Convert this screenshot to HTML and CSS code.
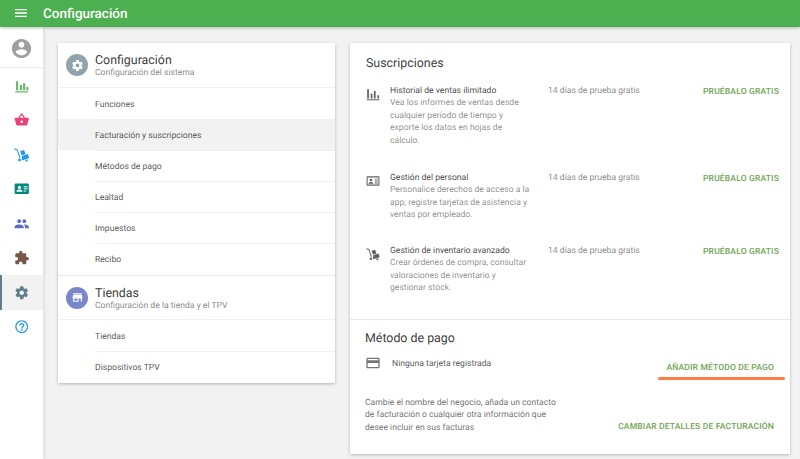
FILE: index.html
```html
<!DOCTYPE html>
<html lang="es">
<head>
<meta charset="utf-8">
<title>Configuración</title>
<link rel="stylesheet" href="styles.css">
</head>
<body>
<header class="topbar">
  <svg class="menu-icon" viewBox="0 0 24 24"><path d="M3 18h18v-2H3v2zm0-5h18v-2H3v2zm0-7v2h18V6H3z"/></svg>
  <span class="topbar-title">Configuración</span>
</header>
<div class="shell">
  <nav class="sidebar">
    <div class="nav-item nav-user"><svg viewBox="0 0 24 24" class="ic-user"><path d="M12 2C6.48 2 2 6.48 2 12s4.48 10 10 10 10-4.48 10-10S17.52 2 12 2zm0 3c1.66 0 3 1.34 3 3s-1.34 3-3 3-3-1.34-3-3 1.34-3 3-3zm0 14.2c-2.5 0-4.71-1.28-6-3.22.03-1.99 4-3.08 6-3.08s5.97 1.09 6 3.08c-1.29 1.94-3.5 3.22-6 3.22z"/></svg></div>
    <div class="nav-item"><svg viewBox="0 0 24 24" class="ic-green"><path d="M2 20.500h20v1.800H2zM3 5h3.400v14H3zM9 11h3.400v8H9zM14 8h3.400v11H14zM19 14h3.200v5H19z"/></svg></div>
    <div class="nav-item"><svg viewBox="0 0 24 24" class="ic-pink"><path d="M17.2 9l-4.4-6.5c-.2-.3-.5-.4-.8-.4s-.6.1-.8.4L6.800 9H2c-.6 0-1 .4-1 1l.04.3 2.540 9.270c.23.840 1 1.460 1.920 1.460h13c.92 0 1.690-.620 1.930-1.460l2.540-9.270L23 10c0-.6-.4-1-1-1h-4.800zM9 9l3-4.400L15 9H9zm3 8c-1.100 0-2-.9-2-2s.9-2 2-2 2 .9 2 2-.9 2-2 2z"/></svg></div>
    <div class="nav-item"><svg viewBox="0 0 24 24" class="ic-blue"><path d="M1 2l4.300 1.500 4.800 12.800-1.800.700L4.400 5 .5 4zM9.500 6.500l6-2 2.500 6.500-6 2.200zM12.500 14l9-3 2 6.500-11.500 3.500z"/><circle cx="8.500" cy="20" r="2.200"/><circle cx="19.500" cy="21" r="1.800"/></svg></div>
    <div class="nav-item"><svg viewBox="0 0 24 24" class="ic-teal"><path fill-rule="evenodd" d="M1 5.500A1.500 1.500 0 0 1 2.500 4h19A1.500 1.500 0 0 1 23 5.500v13a1.500 1.500 0 0 1-1.500 1.500h-19A1.500 1.500 0 0 1 1 18.500zM8.500 7.500a2.500 2.500 0 1 0 0 5 2.500 2.500 0 0 0 0-5zM4 16.500h9v-1c0-1.500-3-2.300-4.500-2.300S4 14 4 15.500zM15 8v1.500h6V8zM15 11.300v1.500h6v-1.500zM15 14.600v1.500h4v-1.500z"/></svg></div>
    <div class="nav-item"><svg viewBox="0 0 24 24" class="ic-indigo"><path d="M16 11c1.660 0 2.990-1.340 2.990-3S17.660 5 16 5c-1.660 0-3 1.340-3 3s1.340 3 3 3zm-8 0c1.660 0 2.990-1.340 2.990-3S9.660 5 8 5C6.340 5 5 6.340 5 8s1.340 3 3 3zm0 2c-2.330 0-7 1.170-7 3.500V19h14v-2.500c0-2.330-4.670-3.500-7-3.500zm8 0c-.29 0-.62.020-.97.050 1.160.840 1.970 1.970 1.970 3.450V19h6v-2.500c0-2.330-4.670-3.500-7-3.500z"/></svg></div>
    <div class="nav-item"><svg viewBox="0 0 24 24" class="ic-brown"><path d="M20.500 11H19V7c0-1.100-.9-2-2-2h-4V3.500C13 2.120 11.880 1 10.500 1S8 2.120 8 3.500V5H4c-1.100 0-1.990.9-1.990 2v3.800H3.500c1.490 0 2.700 1.210 2.700 2.700s-1.210 2.700-2.700 2.700H2V20c0 1.100.9 2 2 2h3.800v-1.500c0-1.490 1.210-2.700 2.700-2.700 1.490 0 2.700 1.210 2.700 2.700V22H17c1.100 0 2-.9 2-2v-4h1.500c1.380 0 2.500-1.120 2.500-2.500S21.880 11 20.500 11z"/></svg></div>
    <div class="nav-item nav-active"><svg viewBox="0 0 24 24" class="ic-slate"><path d="M19.430 12.980c.04-.32.070-.64.070-.98s-.03-.66-.07-.98l2.110-1.650c.19-.15.240-.42.120-.64l-2-3.460c-.12-.22-.39-.3-.61-.22l-2.490 1c-.52-.4-1.080-.73-1.690-.98l-.38-2.650C14.460 2.180 14.250 2 14 2h-4c-.25 0-.46.180-.49.420l-.38 2.650c-.61.250-1.170.590-1.690.98l-2.490-1c-.23-.09-.49 0-.61.220l-2 3.460c-.13.220-.07.490.12.640l2.110 1.650c-.04.320-.07.650-.07.980s.03.660.07.980l-2.110 1.650c-.19.150-.24.420-.12.640l2 3.460c.12.220.39.300.61.220l2.490-1c.52.400 1.080.730 1.690.980l.38 2.650c.03.240.24.420.49.420h4c.25 0 .46-.18.49-.42l.38-2.650c.61-.25 1.170-.59 1.690-.98l2.490 1c.23.090.49 0 .61-.22l2-3.460c.12-.22.070-.49-.12-.64l-2.110-1.650zM12 15.500c-1.930 0-3.500-1.570-3.500-3.500s1.570-3.500 3.500-3.500 3.500 1.570 3.500 3.500-1.570 3.500-3.500 3.500z"/></svg></div>
    <div class="nav-item"><svg viewBox="0 0 24 24" class="ic-help"><path d="M11 18h2v-2h-2v2zm1-16C6.480 2 2 6.480 2 12s4.480 10 10 10 10-4.480 10-10S17.520 2 12 2zm0 18c-4.410 0-8-3.590-8-8s3.590-8 8-8 8 3.590 8 8-3.590 8-8 8zm0-14c-2.210 0-4 1.790-4 4h2c0-1.100.9-2 2-2s2 .9 2 2c0 2-3 1.750-3 5h2c0-2.250 3-2.500 3-5 0-2.210-1.790-4-4-4z"/></svg></div>
  </nav>
  <main class="content">
    <section class="card settings-card">
      <div class="sec-head">
        <span class="sec-badge badge-slate"><svg viewBox="0 0 24 24"><path d="M19.430 12.980c.04-.32.070-.64.070-.98s-.03-.66-.07-.98l2.110-1.650c.19-.15.240-.42.120-.64l-2-3.460c-.12-.22-.39-.3-.61-.22l-2.490 1c-.52-.4-1.080-.73-1.690-.98l-.38-2.650C14.460 2.180 14.250 2 14 2h-4c-.25 0-.46.180-.49.420l-.38 2.650c-.61.250-1.170.590-1.690.98l-2.490-1c-.23-.09-.49 0-.61.220l-2 3.460c-.13.220-.07.490.12.640l2.110 1.650c-.04.320-.07.650-.07.980s.03.660.07.980l-2.110 1.650c-.19.150-.24.420-.12.640l2 3.460c.12.220.39.300.61.220l2.490-1c.52.400 1.080.730 1.690.980l.38 2.650c.03.240.24.420.49.420h4c.25 0 .46-.18.49-.42l.38-2.650c.61-.25 1.170-.59 1.690-.98l2.490 1c.23.090.49 0 .61-.22l2-3.460c.12-.22.070-.49-.12-.64l-2.110-1.650zM12 15.500c-1.930 0-3.500-1.570-3.500-3.500s1.570-3.500 3.500-3.500 3.500 1.570 3.500 3.500-1.570 3.500-3.500 3.500z"/></svg></span>
        <div class="sec-text"><div class="sec-title">Configuración</div><div class="sec-sub">Configuración del sistema</div></div>
      </div>
      <ul class="menu menu-first">
        <li class="menu-row">Funciones</li>
        <li class="menu-row menu-selected">Facturación y suscripciones</li>
        <li class="menu-row">Métodos de pago</li>
        <li class="menu-row">Lealtad</li>
        <li class="menu-row">Impuestos</li>
        <li class="menu-row">Recibo</li>
      </ul>
      <div class="sec-head sec-head-next">
        <span class="sec-badge badge-indigo"><svg viewBox="0 0 24 24"><path d="M20 4H4v2h16V4zm1 10v-2l-1-5H4l-1 5v2h1v6h10v-6h4v6h2v-6h1zm-9 4H6v-4h6v4z"/></svg></span>
        <div class="sec-text"><div class="sec-title">Tiendas</div><div class="sec-sub">Configuración de la tienda y el TPV</div></div>
      </div>
      <ul class="menu">
        <li class="menu-row">Tiendas</li>
        <li class="menu-row">Dispositivos TPV</li>
      </ul>
    </section>
    <section class="card billing-card">
      <div class="subs">
        <h2 class="card-title">Suscripciones</h2>
        <div class="sub-list">
          <div class="sub-row sub-row-tall">
            <svg class="sub-icon" viewBox="0 0 24 24"><path d="M1 21h22v1.800H1zM2 4h3v15.500H2zM8 11h3v8.500H8zM13.500 7h3v12.500h-3zM19.500 14h3v5.500h-3z"/></svg>
            <div class="sub-desc"><div class="sub-name">Historial de ventas ilimitado</div><div class="sub-text">Vea los informes de ventas desde cualquier período de tiempo y exporte los datos en hojas de cálculo.</div></div>
            <div class="sub-trial">14 días de prueba gratis</div>
            <a class="action sub-action">PRUÉBALO GRATIS</a>
          </div>
          <div class="sub-row sub-row-mid">
            <svg class="sub-icon" viewBox="0 0 24 24"><path fill-rule="evenodd" d="M1 5.500A1.500 1.500 0 0 1 2.500 4h19A1.500 1.500 0 0 1 23 5.500v13a1.500 1.500 0 0 1-1.500 1.500h-19A1.500 1.500 0 0 1 1 18.500zM2.800 5.800v12.400h18.400V5.800zM8.500 8a2.300 2.300 0 1 0 0 4.600 2.300 2.300 0 0 0 0-4.600zM4.500 16.500h8v-1c0-1.300-2.700-2-4-2s-4 .7-4 2zM15 8v1.500h5V8zM15 11.300v1.500h5v-1.500zM15 14.600v1.500h5v-1.500z"/></svg>
            <div class="sub-desc"><div class="sub-name">Gestión del personal</div><div class="sub-text">Personalice derechos de acceso a la app, registre tarjetas de asistencia y ventas por empleado.</div></div>
            <div class="sub-trial">14 días de prueba gratis</div>
            <a class="action sub-action">PRUÉBALO GRATIS</a>
          </div>
          <div class="sub-row">
            <svg class="sub-icon" viewBox="0 0 24 24"><path d="M1 2l4.300 1.500 4.800 12.800-1.800.700L4.400 5 .5 4zM9.500 6.500l6-2 2.500 6.500-6 2.200zM12.500 14l9-3 2 6.500-11.500 3.500z"/><circle cx="8.500" cy="20" r="2.200"/><circle cx="19.500" cy="21" r="1.800"/></svg>
            <div class="sub-desc"><div class="sub-name">Gestión de inventario avanzado</div><div class="sub-text">Crear órdenes de compra, consultar valoraciones de inventario y gestionar stock.</div></div>
            <div class="sub-trial">14 días de prueba gratis</div>
            <a class="action sub-action">PRUÉBALO GRATIS</a>
          </div>
        </div>
      </div>
      <div class="payment">
        <h2 class="card-title">Método de pago</h2>
        <div class="pay-row">
          <svg class="pay-icon" viewBox="0 0 24 24"><path d="M20 4H4c-1.110 0-1.990.890-1.990 2L2 18c0 1.110.890 2 2 2h16c1.110 0 2-.890 2-2V6c0-1.110-.890-2-2-2zm0 14H4v-6h16v6zm0-10H4V6h16v2z"/></svg>
          <span class="pay-text">Ninguna tarjeta registrada</span>
          <a class="action pay-action">AÑADIR MÉTODO DE PAGO<span class="highlight"></span></a>
        </div>
        <div class="bill-row">
          <p class="bill-text">Cambie el nombre del negocio, añada un contacto de facturación o cualquier otra información que desee incluir en sus facturas</p>
          <a class="action bill-action">CAMBIAR DETALLES DE FACTURACIÓN</a>
        </div>
      </div>
    </section>
  </main>
</div>
</body>
</html>
```

FILE: styles.css
```css
* { box-sizing: border-box; }
html, body { margin: 0; height: 100%; }
body {
  width: 800px;
  height: 459px;
  overflow: hidden;
  background: #f2f2f2;
  font-family: Roboto, sans-serif;
  color: rgba(0,0,0,.87);
  text-rendering: geometricPrecision;
}
.topbar {
  height: 27px;
  padding: 0 0 2px 13px;
  background: #4caf50;
  display: flex;
  align-items: center;
  box-shadow: 0 1px 3px rgba(0,0,0,.25);
  position: relative;
}
.menu-icon { width: 16px; height: 16px; fill: #fff; }
.topbar-title { margin-left: 14px; padding-top: 2px; color: #fff; font-size: 13.5px; font-weight: 500; }
.shell { display: flex; height: 432px; }
.sidebar {
  width: 44px;
  flex: none;
  background: #fff;
  border-right: 1px solid #e4e4e4;
  display: flex;
  flex-direction: column;
  box-shadow: 0 0 3px rgba(0,0,0,.12);
}
.nav-item {
  height: 34.500px;
  display: flex;
  align-items: center;
  justify-content: center;
}
.nav-item svg { width: 15.500px; height: 15.500px; }
.nav-user { height: 41px; padding-top: 2px; border-bottom: 1px solid #e8e8e8; }
.nav-user svg { width: 23px; height: 23px; }
.nav-active { background: #f2f2f2; border-left: 2px solid #607d8b; padding-right: 2px; }
.ic-user { fill: #9e9e9e; }
.ic-green { fill: #66bb6a; }
.ic-pink { fill: #ec407a; }
.ic-blue { fill: #2196f3; }
.ic-teal { fill: #00897b; }
.ic-indigo { fill: #5c6bc0; }
.ic-brown { fill: #795548; }
.ic-slate { fill: #607d8b; }
.ic-help { fill: #2196f3; }
.content {
  flex: 1;
  display: flex;
  align-items: flex-start;
  gap: 15px;
  padding: 16px 10px 0 14px;
}
.card {
  background: #fff;
  box-shadow: 0 1px 3px rgba(0,0,0,.25);
}
.settings-card { width: 277px; height: 340px; }
.billing-card { width: 440px; height: 411px; display: flex; flex-direction: column; }
.sec-head {
  height: 45.400px;
  display: flex;
  align-items: center;
  border-bottom: 1px solid #f0f0f0;
}
.sec-head-next { height: 45px; border-top: 1px solid #e8e8e8; }
.sec-badge {
  width: 22px;
  height: 22px;
  margin-left: 8px;
  border-radius: 50%;
  display: flex;
  align-items: center;
  justify-content: center;
  flex: none;
}
.sec-badge svg { width: 13px; height: 13px; fill: #fff; }
.badge-slate { background: #90a4ae; }
.badge-indigo { background: #7986cb; }
.sec-text { margin-left: 7px; padding-top: 2px; }
.sec-title { font-size: 12.400px; line-height: 15px; color: rgba(0,0,0,.8); }
.sec-sub { font-size: 8.600px; line-height: 11px; color: rgba(0,0,0,.5); }
.menu { list-style: none; margin: 0; padding: 0; }
.menu-first { padding-bottom: 1px; }
.menu-row {
  height: 31px;
  margin: 0;
  padding-left: 37px;
  padding-top: 3px;
  display: flex;
  align-items: center;
  font-size: 8.600px;
  color: rgba(0,0,0,.7);
  position: relative;
}
.menu-selected { background: #f2f2f2; }
.menu-row + .menu-row::before {
  content: "";
  position: absolute;
  left: 37px;
  right: 0;
  top: 0;
  border-top: 1px solid #f0f0f0;
}
.subs { height: 277px; padding: 13px 11px 0 16px; border-bottom: 1px solid #e8e8e8; }
.card-title { margin: 0; font-size: 12.400px; font-weight: 400; line-height: 16px; color: rgba(0,0,0,.8); }
.sub-list { margin-top: 13px; }
.sub-row { display: flex; align-items: flex-start; }
.sub-row-tall { height: 87px; }
.sub-row-mid { height: 73px; }
.sub-icon { width: 14px; height: 14px; fill: #616161; margin-top: 2px; flex: none; }
.sub-desc { width: 141px; margin-left: 10px; flex: none; }
.sub-name { font-size: 8.600px; line-height: 12.400px; color: rgba(0,0,0,.75); }
.sub-text { font-size: 8.600px; line-height: 12.400px; color: rgba(0,0,0,.48); }
.sub-trial { margin-left: 17px; font-size: 8.600px; line-height: 12.400px; color: rgba(0,0,0,.5); }
.action { color: #6fa552; font-size: 8.500px; font-weight: 500; letter-spacing: .17px; white-space: nowrap; }
.sub-action { margin-left: auto; line-height: 12.400px; padding-top: 1px; }
.payment { padding: 11px 16px 0 15px; flex: 1; }
.pay-row { display: flex; align-items: flex-start; margin-top: 1px; height: 40px; position: relative; }
.pay-icon { width: 16px; height: 16px; fill: #757575; margin-top: 7px; flex: none; }
.pay-text { margin-left: 11px; margin-top: 10px; font-size: 8.600px; line-height: 12.400px; color: rgba(0,0,0,.7); }
.pay-action { margin-left: auto; margin-top: 14px; position: relative; line-height: 12px; }
.highlight {
  position: absolute;
  left: -8px;
  right: -11px;
  top: 15px;
  height: 3px;
  border-radius: 2px;
  background: #ff7a45;
}
.bill-row { display: flex; align-items: flex-end; justify-content: space-between; margin-top: 9px; }
.bill-text { margin: 0; width: 200px; flex: none; font-size: 8.600px; line-height: 12.300px; color: rgba(0,0,0,.6); }
.bill-action { line-height: 12.300px; margin-bottom: 1px; }
```
